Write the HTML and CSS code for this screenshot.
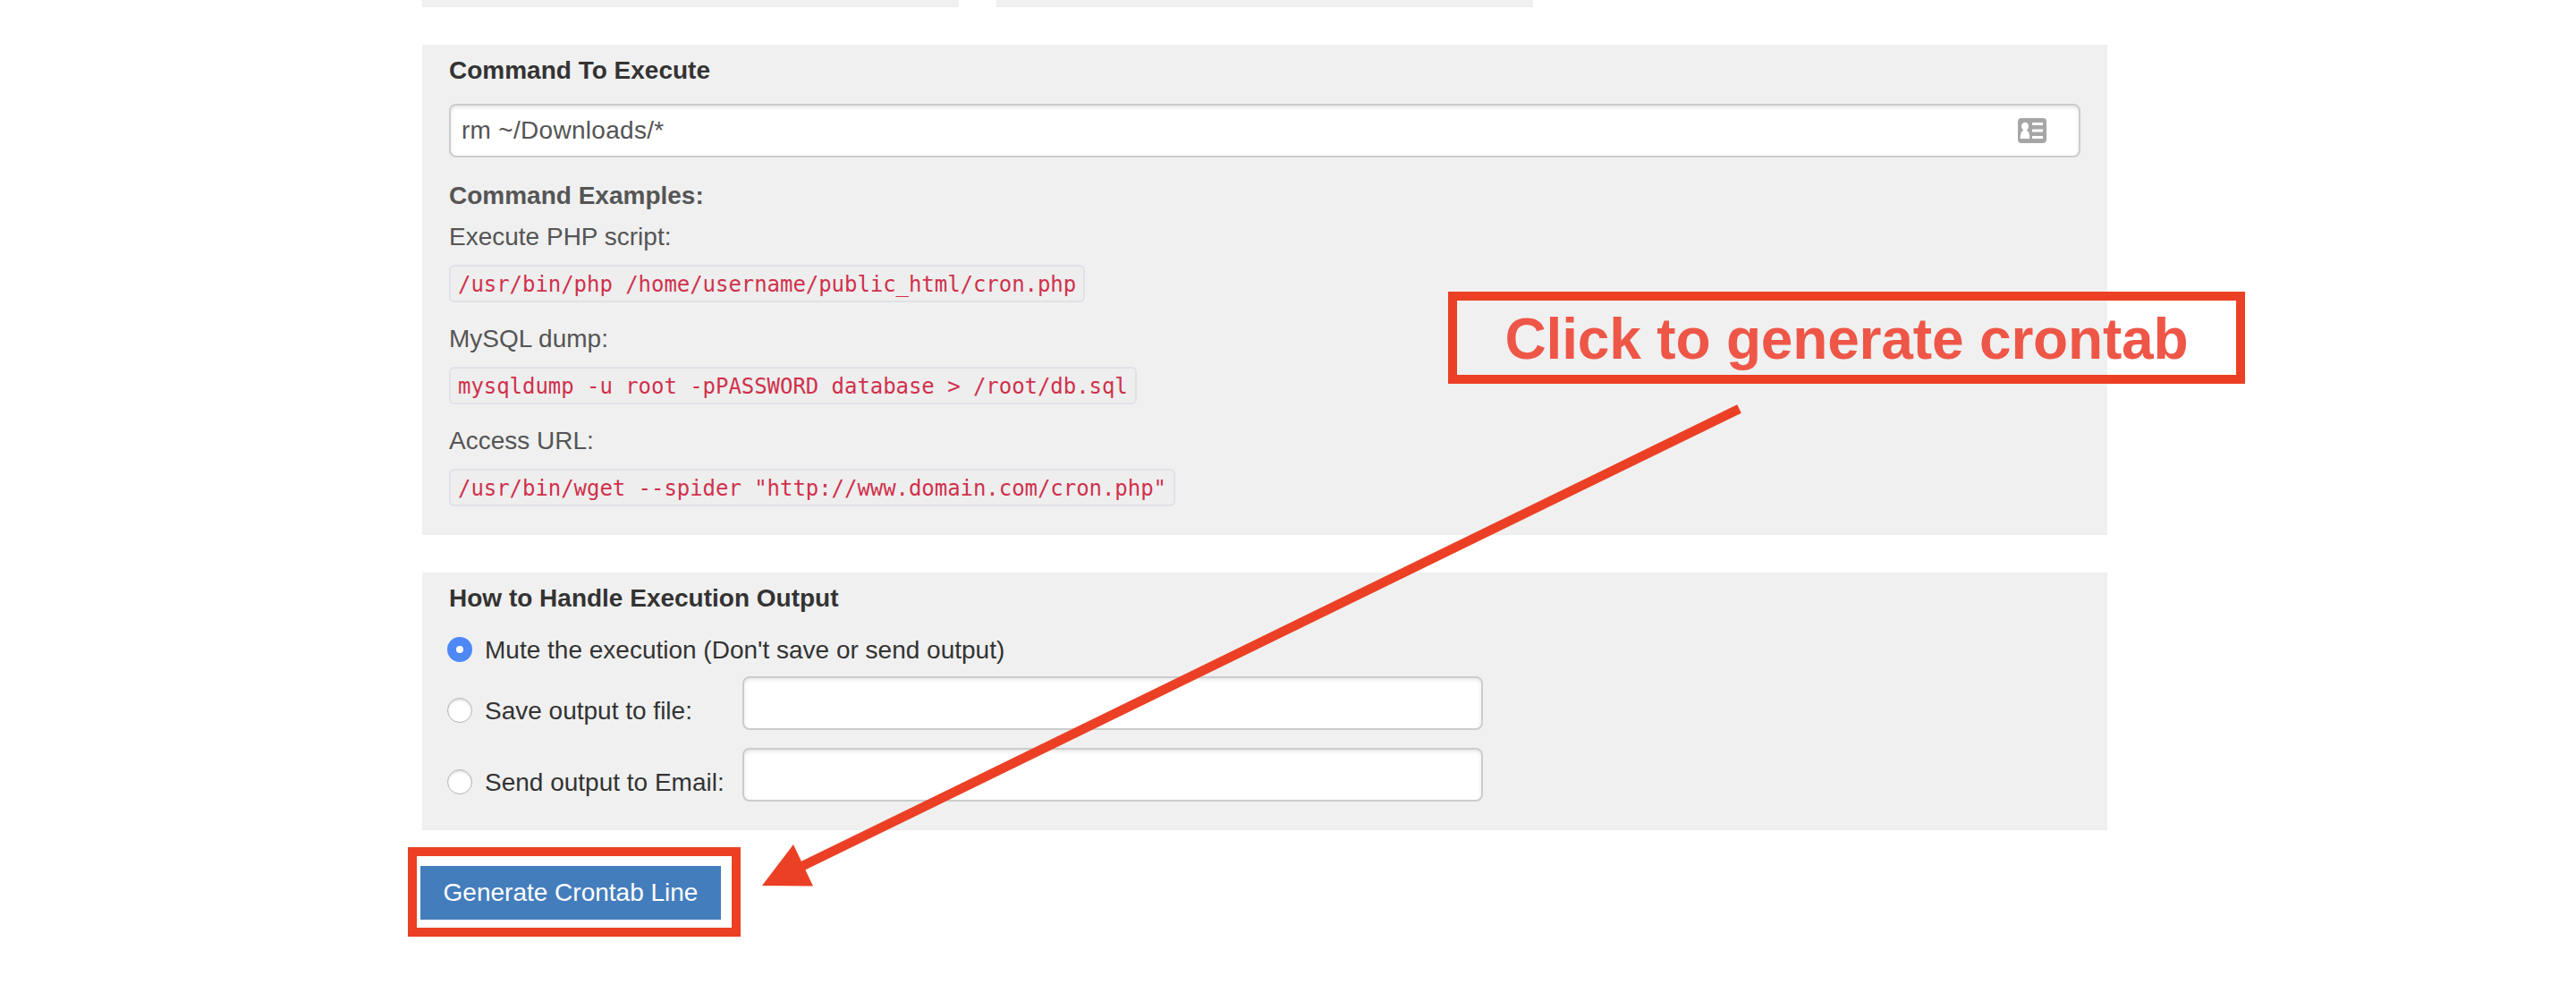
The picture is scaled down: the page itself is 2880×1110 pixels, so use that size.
FILE: index.html
```html
<!DOCTYPE html>
<html lang="en">
<head>
<meta charset="utf-8">
<title>Crontab Generator</title>
<link rel="stylesheet" href="styles.css">
</head>
<body>
<main class="page">
  <div class="previous-row">
    <div class="previous-panel"></div>
    <div class="previous-panel"></div>
  </div>

  <section class="panel panel-command">
    <h2 class="panel-title">Command To Execute</h2>
    <div class="command-field">
      <input class="text-input" type="text" value="rm ~/Downloads/*" aria-label="Command">
      <svg class="contact-icon" viewBox="0 0 32 28" aria-hidden="true">
        <rect width="32" height="28" rx="4" fill="#a6a6a6"/>
        <g fill="#fff">
          <ellipse cx="8" cy="9.3" rx="4" ry="4.6"/>
          <path d="M6 12h4v2c2.500 1 3.300 4.500 3.300 9H2.700c0-4.500.8-8 3.300-9z"/>
          <path d="M16 5h12v3H16zM16 12.500h12v3H16zM16 20h12v3H16z"/>
        </g>
      </svg>
    </div>
    <p class="examples-title">Command Examples:</p>
    <div class="example">
      <p class="example-label">Execute PHP script:</p>
      <code class="code">/usr/bin/php /home/username/public_html/cron.php</code>
    </div>
    <div class="example">
      <p class="example-label">MySQL dump:</p>
      <code class="code">mysqldump -u root -pPASSWORD database &gt; /root/db.sql</code>
    </div>
    <div class="example">
      <p class="example-label">Access URL:</p>
      <code class="code">/usr/bin/wget --spider "http://www.domain.com/cron.php"</code>
    </div>
  </section>

  <section class="panel panel-output">
    <h2 class="panel-title">How to Handle Execution Output</h2>
    <label class="option option-mute">
      <input class="radio" type="radio" name="output" checked>
      <span class="option-text">Mute the execution (Don't save or send output)</span>
    </label>
    <div class="option-row">
      <label class="option option-target">
        <input class="radio" type="radio" name="output">
        <span class="option-text">Save output to file:</span>
      </label>
      <input class="text-input" type="text" aria-label="File">
    </div>
    <div class="option-row">
      <label class="option option-target">
        <input class="radio" type="radio" name="output">
        <span class="option-text">Send output to Email:</span>
      </label>
      <input class="text-input" type="text" aria-label="Email">
    </div>
  </section>

  <div class="actions">
    <button class="generate" type="button">Generate Crontab Line</button>
  </div>

  <div class="highlight"></div>
  <div class="callout">Click to generate crontab</div>
  <svg class="arrow" viewBox="0 0 1110 550" aria-hidden="true">
    <path d="M1098.500 17L40 533.500" stroke="#eb4025" stroke-width="10.500" fill="none"/>
    <path d="M6 550L41 504L63 550.500z" fill="#eb4025"/>
  </svg>
</main>
</body>
</html>
```

FILE: styles.css
```css
* {
  box-sizing: border-box;
}

body {
  margin: 0;
  background: #fff;
  color: #333;
  font: 28px/40px "Liberation Sans", Arial, sans-serif;
}

h2,
p {
  margin: 0;
}

.page {
  position: relative;
  height: 1110px;
  padding-left: 472px;
  overflow: hidden;
}

.previous-row {
  display: flex;
  gap: 42px;
  height: 8px;
}

.previous-panel {
  width: 600px;
  background: #f0f0f0;
  border-bottom: 2px solid #eee;
}

.panel {
  width: 1884px;
  margin-top: 42px;
  padding: 8px 30px 0;
  background: #f0f0f0;
  border-bottom: 2px solid #eee;
}

.panel-command {
  height: 548px;
}

.panel-output {
  height: 288px;
}

.panel-title {
  padding-top: 1px;
  font-size: 28px;
  line-height: 39px;
}

.text-input {
  width: 828px;
  height: 60px;
  padding: 0 12px;
  border: 2px solid #ccc;
  border-radius: 8px;
  background: #fff;
  box-shadow: inset 0 2px 4px rgba(0, 0, 0, 0.1);
  color: #555;
  font: inherit;
  letter-spacing: 0.3px;
}

.command-field {
  position: relative;
  display: flex;
  margin: 18px 0 19px;
}

.command-field .text-input {
  width: 100%;
}

.contact-icon {
  position: absolute;
  top: 16px;
  right: 38px;
  width: 32px;
  height: 28px;
}

.examples-title,
.example-label {
  padding-top: 1px;
  color: #555;
  line-height: 45px;
}

.examples-title {
  font-weight: bold;
}

.example {
  display: flex;
  flex-direction: column;
  align-items: flex-start;
  gap: 9px;
  margin-bottom: 17px;
}

.code {
  height: 42px;
  padding: 0 8px;
  border: 2px solid #e1e1e8;
  border-radius: 6px;
  background: #eee;
  color: #d0314c;
  font: 24px/40px "DejaVu Sans Mono", monospace;
  letter-spacing: -0.05px;
  white-space: pre;
}

.option {
  display: flex;
  align-items: center;
  gap: 14px;
  margin-left: -2px;
}

.option-mute {
  height: 40px;
  margin-top: 18px;
  margin-bottom: 10px;
}

.option-text {
  padding-top: 2px;
}

.option-row {
  display: flex;
  height: 60px;
  margin-bottom: 20px;
}

.option-target {
  width: 330px;
  height: 40px;
  margin-top: 18px;
}

.radio {
  appearance: none;
  width: 28px;
  height: 28px;
  margin: 0;
  border: 1px solid #b4b4b4;
  border-radius: 50%;
  background: #fff;
  box-shadow: inset 0 2px 2px rgba(0, 0, 0, 0.12);
}

.radio:checked {
  border: 10px solid #4d88f5;
  box-shadow: none;
}

.actions {
  margin: 40px 0 0 -2px;
}

.generate {
  display: block;
  width: 336px;
  height: 60px;
  padding: 0;
  border: 0;
  background: #447dbc;
  color: #fff;
  font: inherit;
}

.highlight {
  position: absolute;
  top: 947px;
  left: 456px;
  width: 372px;
  height: 100px;
  border: 10px solid #eb4025;
}

.callout {
  position: absolute;
  top: 326px;
  left: 1619px;
  width: 891px;
  height: 103px;
  padding-top: 1px;
  border: 10px solid #eb4025;
  color: #ee5647;
  font-size: 64px;
  font-weight: bold;
  letter-spacing: -0.17px;
  line-height: 84px;
  text-align: center;
  white-space: nowrap;
}

.arrow {
  position: absolute;
  top: 440px;
  left: 846px;
  width: 1110px;
  height: 550px;
  overflow: visible;
}
```
